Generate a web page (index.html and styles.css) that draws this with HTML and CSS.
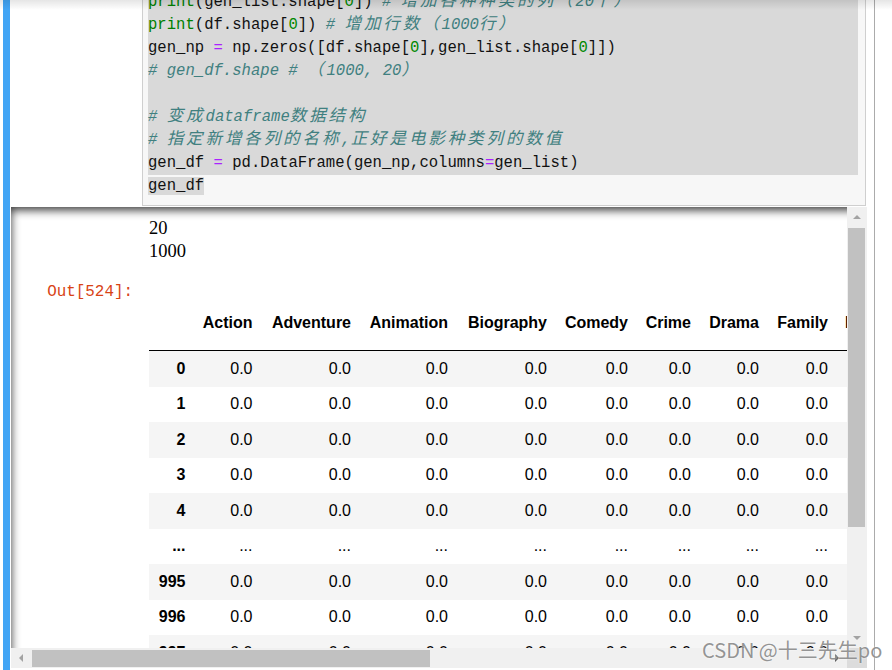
FILE: index.html
```html
<!DOCTYPE html>
<html lang="zh">
<head>
<meta charset="utf-8">
<title>Notebook</title>
<link rel="stylesheet" href="styles.css">
</head>
<body>
<div class="nb">
  <div class="cell">
    <div class="input">
      <div class="prompt"></div>
      <div class="inner">
        <div class="code">
          <div class="ln sel"><span class="bi">print</span>(gen_list.shape[<span class="num">0</span>]) <span class="cm"># <span class="cjk">增加各种种类的列（</span>20<span class="cjk">个）</span></span></div>
          <div class="ln sel"><span class="bi">print</span>(df.shape[<span class="num">0</span>]) <span class="cm"># <span class="cjk">增加行数（</span>1000<span class="cjk">行）</span></span></div>
          <div class="ln sel">gen_np <span class="op">=</span> np.zeros([df.shape[<span class="num">0</span>],gen_list.shape[<span class="num">0</span>]])</div>
          <div class="ln sel"><span class="cm"># gen_df.shape # <span class="cjk">（</span>1000, 20<span class="cjk">）</span></span></div>
          <div class="ln sel"> </div>
          <div class="ln sel"><span class="cm"># <span class="cjk">变成</span>dataframe<span class="cjk">数据结构</span></span></div>
          <div class="ln sel"><span class="cm"># <span class="cjk">指定新增各列的名称</span>,<span class="cjk">正好是电影种类列的数值</span></span></div>
          <div class="ln sel">gen_df <span class="op">=</span> pd.DataFrame(gen_np,columns<span class="op">=</span>gen_list)</div>
          <div class="ln"><span class="selt">gen_df</span></div>
        </div>
      </div>
    </div>
    <div class="output">
      <div class="oscroll">
        <div class="viewport">
          <div class="orow stream">
            <div class="oprompt"></div>
            <pre class="text">20
1000</pre>
          </div>
          <div class="orow result">
            <div class="oprompt">Out[524]:</div>
            <div class="df">
              <table>
                <colgroup>
                  <col class="w-idx"><col class="w-action"><col class="w-adventure"><col class="w-animation"><col class="w-biography"><col class="w-comedy"><col class="w-crime"><col class="w-drama"><col class="w-family">
                </colgroup>
                <thead>
                  <tr><th></th><th>Action</th><th>Adventure</th><th>Animation</th><th>Biography</th><th>Comedy</th><th>Crime</th><th>Drama</th><th>Family</th><th>Fantasy</th><th>History</th><th>Horror</th><th>Music</th><th>Musical</th><th>Mystery</th><th>Romance</th><th>Sci-Fi</th><th>Sport</th><th>Thriller</th><th>War</th><th>Western</th></tr>
                </thead>
                <tbody>
                  <tr><th>0</th><td>0.0</td><td>0.0</td><td>0.0</td><td>0.0</td><td>0.0</td><td>0.0</td><td>0.0</td><td>0.0</td><td>0.0</td><td>0.0</td><td>0.0</td><td>0.0</td><td>0.0</td><td>0.0</td><td>0.0</td><td>0.0</td><td>0.0</td><td>0.0</td><td>0.0</td><td>0.0</td></tr>
                  <tr><th>1</th><td>0.0</td><td>0.0</td><td>0.0</td><td>0.0</td><td>0.0</td><td>0.0</td><td>0.0</td><td>0.0</td><td>0.0</td><td>0.0</td><td>0.0</td><td>0.0</td><td>0.0</td><td>0.0</td><td>0.0</td><td>0.0</td><td>0.0</td><td>0.0</td><td>0.0</td><td>0.0</td></tr>
                  <tr><th>2</th><td>0.0</td><td>0.0</td><td>0.0</td><td>0.0</td><td>0.0</td><td>0.0</td><td>0.0</td><td>0.0</td><td>0.0</td><td>0.0</td><td>0.0</td><td>0.0</td><td>0.0</td><td>0.0</td><td>0.0</td><td>0.0</td><td>0.0</td><td>0.0</td><td>0.0</td><td>0.0</td></tr>
                  <tr><th>3</th><td>0.0</td><td>0.0</td><td>0.0</td><td>0.0</td><td>0.0</td><td>0.0</td><td>0.0</td><td>0.0</td><td>0.0</td><td>0.0</td><td>0.0</td><td>0.0</td><td>0.0</td><td>0.0</td><td>0.0</td><td>0.0</td><td>0.0</td><td>0.0</td><td>0.0</td><td>0.0</td></tr>
                  <tr><th>4</th><td>0.0</td><td>0.0</td><td>0.0</td><td>0.0</td><td>0.0</td><td>0.0</td><td>0.0</td><td>0.0</td><td>0.0</td><td>0.0</td><td>0.0</td><td>0.0</td><td>0.0</td><td>0.0</td><td>0.0</td><td>0.0</td><td>0.0</td><td>0.0</td><td>0.0</td><td>0.0</td></tr>
                  <tr><th>...</th><td>...</td><td>...</td><td>...</td><td>...</td><td>...</td><td>...</td><td>...</td><td>...</td><td>...</td><td>...</td><td>...</td><td>...</td><td>...</td><td>...</td><td>...</td><td>...</td><td>...</td><td>...</td><td>...</td><td>...</td></tr>
                  <tr><th>995</th><td>0.0</td><td>0.0</td><td>0.0</td><td>0.0</td><td>0.0</td><td>0.0</td><td>0.0</td><td>0.0</td><td>0.0</td><td>0.0</td><td>0.0</td><td>0.0</td><td>0.0</td><td>0.0</td><td>0.0</td><td>0.0</td><td>0.0</td><td>0.0</td><td>0.0</td><td>0.0</td></tr>
                  <tr><th>996</th><td>0.0</td><td>0.0</td><td>0.0</td><td>0.0</td><td>0.0</td><td>0.0</td><td>0.0</td><td>0.0</td><td>0.0</td><td>0.0</td><td>0.0</td><td>0.0</td><td>0.0</td><td>0.0</td><td>0.0</td><td>0.0</td><td>0.0</td><td>0.0</td><td>0.0</td><td>0.0</td></tr>
                  <tr><th>997</th><td>0.0</td><td>0.0</td><td>0.0</td><td>0.0</td><td>0.0</td><td>0.0</td><td>0.0</td><td>0.0</td><td>0.0</td><td>0.0</td><td>0.0</td><td>0.0</td><td>0.0</td><td>0.0</td><td>0.0</td><td>0.0</td><td>0.0</td><td>0.0</td><td>0.0</td><td>0.0</td></tr>
                  <tr><th>998</th><td>0.0</td><td>0.0</td><td>0.0</td><td>0.0</td><td>0.0</td><td>0.0</td><td>0.0</td><td>0.0</td><td>0.0</td><td>0.0</td><td>0.0</td><td>0.0</td><td>0.0</td><td>0.0</td><td>0.0</td><td>0.0</td><td>0.0</td><td>0.0</td><td>0.0</td><td>0.0</td></tr>
                  <tr><th>999</th><td>0.0</td><td>0.0</td><td>0.0</td><td>0.0</td><td>0.0</td><td>0.0</td><td>0.0</td><td>0.0</td><td>0.0</td><td>0.0</td><td>0.0</td><td>0.0</td><td>0.0</td><td>0.0</td><td>0.0</td><td>0.0</td><td>0.0</td><td>0.0</td><td>0.0</td><td>0.0</td></tr>
                </tbody>
              </table>
              <p class="shape">1000 rows × 20 columns</p>
            </div>
          </div>
        </div>
        <div class="vbar">
          <div class="btn"><span class="tri up"></span></div>
          <div class="vthumb"></div>
          <div class="spacer"></div>
          <div class="btn"><span class="tri down"></span></div>
        </div>
        <div class="hbar">
          <div class="btn"><span class="tri left"></span></div>
          <div class="hthumb"></div>
          <div class="spacer"></div>
          <div class="btn"><span class="tri right"></span></div>
        </div>
        <div class="corner"></div>
      </div>
    </div>
  </div>
</div>
<div class="shade"></div>
<div class="watermark">CSDN @十三先生po</div>
</body>
</html>
```
FILE: styles.css
```css
* { box-sizing: border-box; }
html, body { margin: 0; padding: 0; background: #fff; }
body {
  width: 892px;
  height: 670px;
  overflow: hidden;
  position: relative;
  font-family: "Liberation Sans", Arial, sans-serif;
}

.shade {
  position: absolute;
  left: 0; top: 0; right: 0;
  height: 10px;
  background: linear-gradient(rgba(0,0,0,0.10), rgba(0,0,0,0));
  pointer-events: none;
}

.nb { padding-left: 3px; }

.cell {
  width: 872px;
  height: 686px;
  border-left: 7px solid #42a5f5;
  border-right: 1px solid #ababab;
}

/* ---------- input ---------- */
.input {
  display: flex;
  margin-top: -14px;
}
.prompt { width: 132px; flex: none; }
.inner {
  width: 724px;
  flex: none;
  border: 1px solid #cfcfcf;
  background: #f7f7f7;
  padding: 4px 7px 7px 5px;
}
.code {
  font-family: "Liberation Mono", "Noto Sans CJK SC", monospace;
  font-size: 15.6px;
  line-height: 23px;
  color: #111;
}
.ln { height: 23px; white-space: pre; }
.ln.sel { background: #d9d9d9; }
.selt { background: #d9d9d9; }
.bi { color: #008000; }
.num { color: #008800; }
.op { color: #aa22ff; }
.cm { color: #408080; font-style: italic; }
.cjk {
  font-family: "Noto Sans CJK SC", sans-serif;
  font-size: 16.5px;
  line-height: 1;
  letter-spacing: 2.9px;
}

/* ---------- output ---------- */
.output { margin: 1px 7px 0 1px; }
.oscroll {
  display: grid;
  grid-template-columns: 836px 20px;
  grid-template-rows: 441px 20px;
  box-shadow: inset 0 3px 10px rgba(0,0,0,0.8);
}
.viewport { overflow: hidden; }
.orow { display: flex; }
.oprompt {
  width: 138px;
  flex: none;
  padding-right: 16px;
  text-align: right;
  font-family: "Liberation Mono", monospace;
  font-size: 15.9px;
  line-height: 23px;
  color: #d84315;
}
.stream { padding-top: 9.5px; }
.text {
  margin: 0;
  font-family: "Liberation Serif", serif;
  font-size: 18.5px;
  line-height: 23px;
  color: #000;
}
.result { margin-top: 18.5px; }
.df { flex: none; padding-top: 23px; }

table {
  border-collapse: separate;
  border-spacing: 0;
  font-family: "Liberation Sans", Arial, sans-serif;
  font-size: 16px;
  color: #000;
}
.w-idx { width: 45px; }
.w-action { width: 67px; }
.w-adventure { width: 98.5px; }
.w-animation { width: 97px; }
.w-biography { width: 99px; }
.w-comedy { width: 81px; }
.w-crime { width: 63px; }
.w-drama { width: 68px; }
.w-family { width: 69px; }

thead th {
  padding: 10px 8.5px 18px;
  line-height: 18px;
  text-align: right;
  font-weight: bold;
  white-space: nowrap;
  border-bottom: 1px solid #000;
}
tbody th, tbody td {
  padding: 8.75px 8.5px;
  line-height: 18px;
  text-align: right;
  white-space: nowrap;
}
tbody th { font-weight: bold; }
tbody tr:nth-child(odd) { background: #f5f5f5; }
.shape { margin: 12px 0; font-size: 16px; }

/* ---------- scrollbars ---------- */
.vbar {
  background: #f0f0f0;
  display: flex;
  flex-direction: column;
}
.hbar {
  background: #f0f0f0;
  display: flex;
}
.btn {
  width: 20px;
  height: 20px;
  flex: none;
  display: flex;
  align-items: center;
  justify-content: center;
}
.spacer { flex: 1; }
.vthumb {
  height: 299px;
  margin: 1px 2px 0 1px;
  background: #c1c1c1;
}
.hthumb {
  width: 398px;
  height: 17px;
  margin: 2px 0 0 1px;
  background: #c1c1c1;
}
.corner { background: #dcdcdc; }
.tri { width: 0; height: 0; }
.tri.up { border-left: 4px solid transparent; border-right: 4px solid transparent; border-bottom: 4px solid #a3a3a3; }
.tri.down { border-left: 4px solid transparent; border-right: 4px solid transparent; border-top: 4px solid #a3a3a3; }
.tri.left { border-top: 4px solid transparent; border-bottom: 4px solid transparent; border-right: 4px solid #a3a3a3; }
.tri.right { border-top: 4px solid transparent; border-bottom: 4px solid transparent; border-left: 4px solid #505050; }

/* ---------- watermark ---------- */
.watermark {
  position: absolute;
  left: 702px;
  top: 638px;
  font-family: "Noto Sans CJK SC", "Noto Sans", sans-serif;
  font-size: 20px;
  line-height: 24px;
  color: rgba(130,130,130,0.85);
  text-shadow: 0 0 2px rgba(255,255,255,0.9);
  white-space: nowrap;
}
```
